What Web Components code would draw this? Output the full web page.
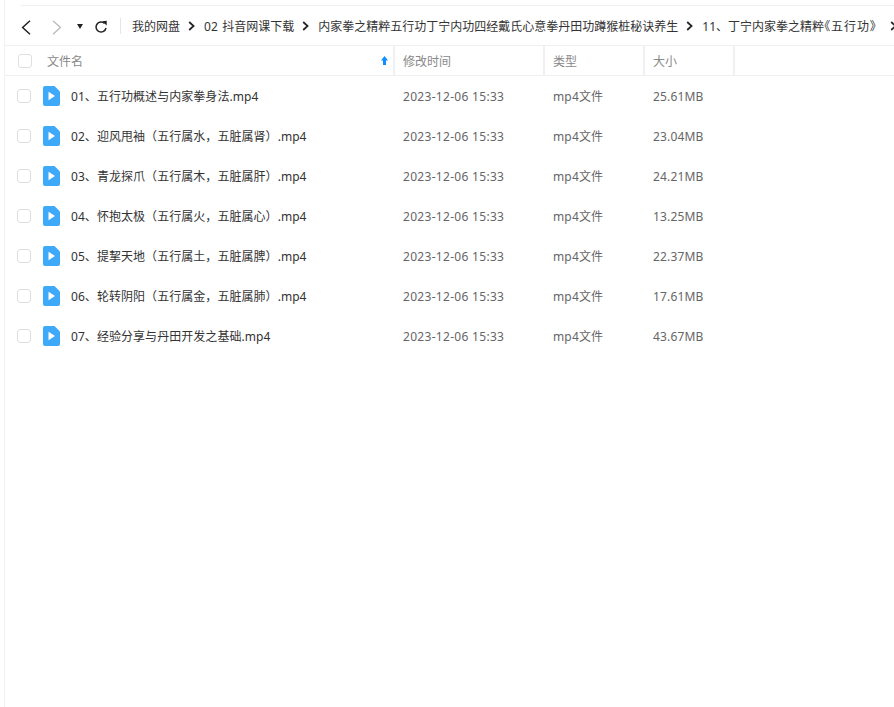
<!DOCTYPE html>
<html>
<head>
<meta charset="utf-8">
<style>
  html, body { margin: 0; height: 100%; background: #fff; }
  body { font-family: "Noto Sans", "Noto Sans CJK SC", sans-serif; font-size: 12px; overflow: hidden; }
  .tight { font-feature-settings: "palt"; letter-spacing: 1px; padding-right: 5px; }
</style>
</head>
<body>
<pan-list>
  <pan-toolbar>
    <pan-crumb>我的网盘</pan-crumb>
    <pan-crumb>02 抖音网课下载</pan-crumb>
    <pan-crumb>内家拳之精粹五行功丁宁内功四经戴氏心意拳丹田功蹲猴桩秘诀养生</pan-crumb>
    <pan-crumb>11、丁宁内家拳之精粹<span class="tight">《五行功》</span></pan-crumb>
  </pan-toolbar>
  <pan-header></pan-header>
  <pan-row name="01、五行功概述与内家拳身法.mp4" size="25.61MB"></pan-row>
  <pan-row name="02、迎风甩袖（五行属水，五脏属肾）.mp4" size="23.04MB"></pan-row>
  <pan-row name="03、青龙探爪（五行属木，五脏属肝）.mp4" size="24.21MB"></pan-row>
  <pan-row name="04、怀抱太极（五行属火，五脏属心）.mp4" size="13.25MB"></pan-row>
  <pan-row name="05、提挈天地（五行属土，五脏属脾）.mp4" size="22.37MB"></pan-row>
  <pan-row name="06、轮转阴阳（五行属金，五脏属肺）.mp4" size="17.61MB"></pan-row>
  <pan-row name="07、经验分享与丹田开发之基础.mp4" size="43.67MB"></pan-row>
</pan-list>
<script>
// small helper, every element gets its own open shadow root
function shadow(el, html) {
  el.attachShadow({ mode: 'open' });
  el.shadowRoot.innerHTML = html;
}

const SEP = `<svg width="7" height="10" viewBox="0 0 7 10"><path d="M1.2 1 5.6 5 1.2 9" fill="none" stroke="#222" stroke-width="1.7"/></svg>`;

class PanList extends HTMLElement {
  connectedCallback() {
    shadow(this, `
      <style>
        :host { display: block; height: 100vh; margin-left: 4px; border-left: 1px solid #f0f0f0; box-sizing: border-box; overflow: hidden; }
      </style>
      <slot></slot>`);
  }
}

class PanToolbar extends HTMLElement {
  connectedCallback() {
    shadow(this, `
      <style>
        :host { display: block; height: 46px; box-sizing: border-box; padding-top: 5px; border-bottom: 1px solid #f0f0f0; }
        .bar { display: flex; align-items: center; height: 40px; box-sizing: border-box; padding-top: 1px; margin-left: 16px; border-top: 1px solid #f0f0f0; white-space: nowrap; overflow: hidden; }
        svg { flex: none; display: block; }
        .back { margin-top: 2px; }
        .fwd { margin: 2px 0 0 21px; }
        .drop { margin: 1px 0 0 15px; }
        .reload { margin-left: 12px; }
        .rule { flex: none; width: 1px; height: 16px; background: #e6e6e6; margin: 0 11px 0 13px; }
      </style>
      <div class="bar">
        <svg class="back" width="10" height="15" viewBox="0 0 10 15"><path d="M9 .8 1.6 7.5 9 14.2" fill="none" stroke="#222" stroke-width="1.5"/></svg>
        <svg class="fwd" width="10" height="15" viewBox="0 0 10 15"><path d="M1 .8 8.4 7.5 1 14.2" fill="none" stroke="#bbb" stroke-width="1.4"/></svg>
        <svg class="drop" width="6" height="5" viewBox="0 0 6 5"><path d="M0 0h6L3 5z" fill="#222"/></svg>
        <svg class="reload" width="12" height="13" viewBox="0 0 12 13"><path d="M9.6 3.4A5 5 0 1 0 11 8" fill="none" stroke="#222" stroke-width="1.5"/><path d="M7.4 1.2 11.8 .8 11.6 5.4z" fill="#222"/></svg>
        <span class="rule"></span>
        <slot></slot>
      </div>`);
  }
}

class PanCrumb extends HTMLElement {
  connectedCallback() {
    shadow(this, `
      <style>
        :host { display: inline-flex; align-items: center; flex: none; color: #333; word-spacing: 1.4px; }
        svg { margin: 0 9px 0 8px; flex: none; }
      </style>
      <span><slot></slot></span>${SEP}`);
  }
}

class PanCheck extends HTMLElement {
  connectedCallback() {
    shadow(this, `
      <style>
        :host { display: block; width: 12px; height: 12px; border: 1px solid #dfdfdf; border-radius: 3px; background: #fff; }
      </style>`);
  }
}

class PanFileIcon extends HTMLElement {
  connectedCallback() {
    shadow(this, `
      <style>
        :host { display: block; width: 17px; height: 20px; }
        svg { display: block; }
      </style>
      <svg width="17" height="20" viewBox="0 0 17 20">
        <path d="M2 0h9.5L17 5.5V18a2 2 0 0 1-2 2H2a2 2 0 0 1-2-2V2a2 2 0 0 1 2-2z" fill="#3fa9f9"/>
        <path d="M5.5 5.8 12 10 5.5 14.2z" fill="#fff"/>
      </svg>`);
  }
}

class PanHeader extends HTMLElement {
  connectedCallback() {
    shadow(this, `
      <style>
        :host { display: block; height: 30px; box-sizing: border-box; border-bottom: 1px solid #f0f0f0; color: #888; }
        .cols { display: grid; grid-template-columns: 390px 150px 100px 90px; height: 29px; }
        .col { display: flex; align-items: center; padding-left: 8px; border-right: 2px solid #f0f0f0; box-sizing: border-box; }
        .name { padding-left: 13px; padding-right: 5px; gap: 15px; }
        .name span { flex: 1; }
        pan-check { flex: none; }
      </style>
      <div class="cols">
        <div class="col name">
          <pan-check></pan-check>
          <span>文件名</span>
          <svg width="7" height="9" viewBox="0 0 7 9"><path d="M3.5 0 7 4.5H5V9H2V4.5H0z" fill="#0d8fff"/></svg>
        </div>
        <div class="col">修改时间</div>
        <div class="col">类型</div>
        <div class="col">大小</div>
      </div>`);
  }
}

class PanRow extends HTMLElement {
  connectedCallback() {
    shadow(this, `
      <style>
        :host { display: grid; grid-template-columns: 390px 150px 100px 90px; height: 40px; align-items: center; color: #666; }
        .name { display: flex; align-items: center; padding-left: 12px; color: #333; letter-spacing: .05px; }
        pan-check { margin-right: 12px; }
        pan-file-icon { margin-right: 11px; }
        .cell { padding-left: 8px; letter-spacing: .15px; }
        .date { letter-spacing: .3px; }
      </style>
      <div class="name"><pan-check></pan-check><pan-file-icon></pan-file-icon><span>${this.getAttribute('name')}</span></div>
      <div class="cell date">2023-12-06 15:33</div>
      <div class="cell">mp4文件</div>
      <div class="cell">${this.getAttribute('size')}</div>`);
  }
}

customElements.define('pan-list', PanList);
customElements.define('pan-toolbar', PanToolbar);
customElements.define('pan-crumb', PanCrumb);
customElements.define('pan-check', PanCheck);
customElements.define('pan-file-icon', PanFileIcon);
customElements.define('pan-header', PanHeader);
customElements.define('pan-row', PanRow);
</script>
</body>
</html>
